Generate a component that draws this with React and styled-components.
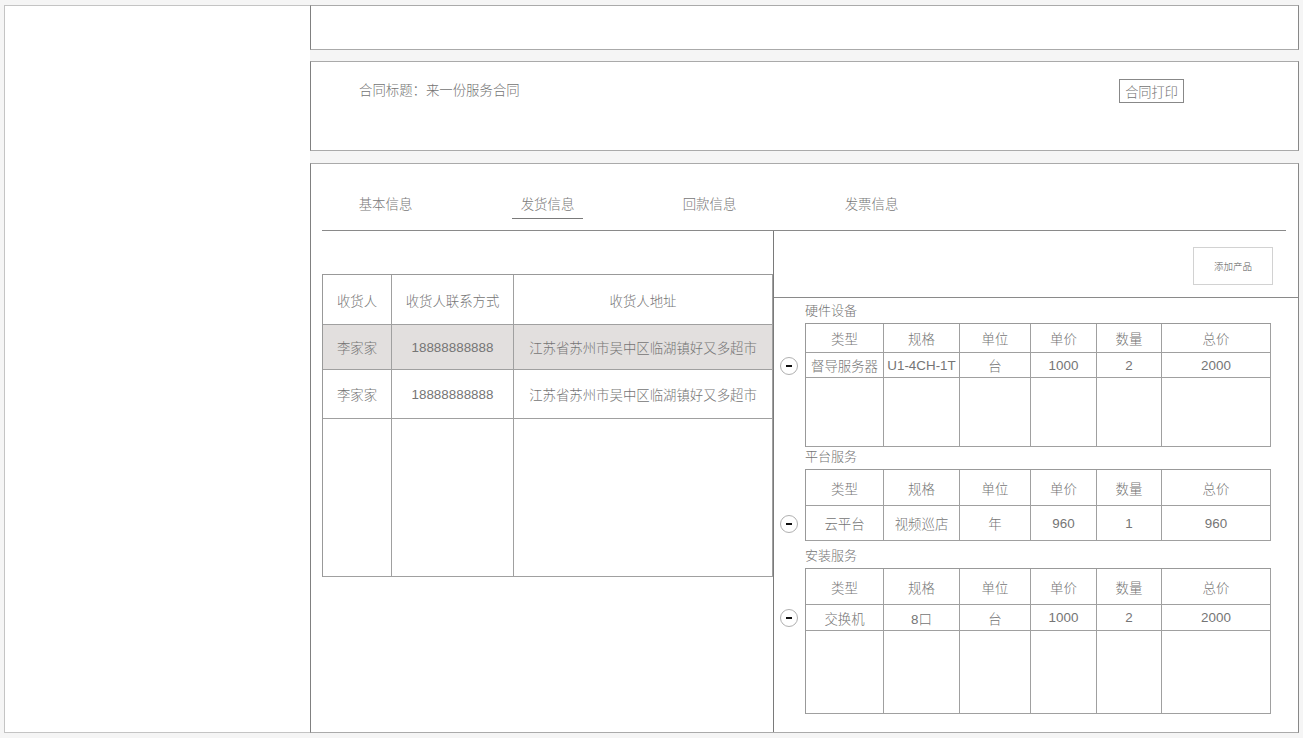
import React from 'react'
import styled, { createGlobalStyle } from 'styled-components'

const GlobalStyle = createGlobalStyle`
  html, body {
    margin: 0;
    padding: 0;
    background: #f5f5f5;
  }
  body {
    font-family: "Liberation Sans", "Noto Sans CJK SC", sans-serif;
    font-weight: 300;
    color: #737373;
  }
  * {
    box-sizing: border-box;
  }
`

const Shell = styled.div`
  display: flex;
  height: 728px;
  margin: 5px 0 0 4px;
`

const Sidebar = styled.aside`
  width: 306px;
  background: #fff;
  border: 1px solid #c4c4c4;
  border-right: none;
`

const MainColumn = styled.main`
  width: 989px;
  display: flex;
  flex-direction: column;
`

const Panel = styled.section`
  background: #fff;
  border: 1px solid #aaa;
  border-left-color: #808080;
  border-right-color: #888;
  height: ${(p) => p.$height || 'auto'};
  margin-bottom: ${(p) => p.$after || '0'};
  flex: ${(p) => (p.$grow ? '1 1 auto' : '0 0 auto')};
  display: flex;
  flex-direction: column;
`

const TitleRow = styled.div`
  display: flex;
  justify-content: space-between;
  align-items: center;
  padding: 17px 114px 0 48px;
`

const Title = styled.span`
  font-size: 13.4px;
  line-height: 24px;
`

const OutlineButton = styled.button`
  height: 24px;
  width: 65px;
  padding: 0;
  background: #fff;
  border: 1px solid #888;
  font-family: inherit;
  font-weight: 300;
  font-size: 13.2px;
  color: #737373;
  cursor: pointer;
`

const TabStrip = styled.nav`
  height: 67px;
  margin: 0 12px 0 11px;
  padding: 0 0 11px 28px;
  display: flex;
  align-items: flex-end;
  gap: 91px;
  border-bottom: 1px solid #8a8a8a;
`

const Tab = styled.div`
  width: 71px;
  height: 28px;
  line-height: 27px;
  text-align: center;
  font-size: 13.4px;
  color: #777;
  border-bottom: 1px solid ${(p) => (p.$active ? '#7a7a7a' : 'transparent')};
`

const Body = styled.div`
  flex: 1;
  display: flex;
`

const LeftPane = styled.div`
  width: 462px;
  padding: 43px 0 0 11px;
`

const RightPane = styled.div`
  flex: 1;
  border-left: 1px solid #7a7a7a;
  display: flex;
  flex-direction: column;
`

const Grid = styled.div`
  display: grid;
  grid-template-columns: ${(p) => p.$cols};
  border-top: 1px solid #999;
  border-left: 1px solid #999;
  width: ${(p) => p.$width};
`

const Cell = styled.div`
  height: ${(p) => p.$h}px;
  border-right: 1px solid #a0a0a0;
  border-bottom: 1px solid #a0a0a0;
  background: ${(p) => (p.$shade ? '#e2dfde' : '#fff')};
  display: flex;
  align-items: center;
  justify-content: center;
  font-size: 13.4px;
  color: #757575;
  white-space: nowrap;
  overflow: hidden;
`

const Toolbar = styled.div`
  height: 67px;
  padding: 16px 25px 0 0;
  display: flex;
  justify-content: flex-end;
  align-items: flex-start;
  border-bottom: 1px solid #8a8a8a;
`

const SmallButton = styled.button`
  width: 80px;
  height: 38px;
  padding: 0;
  background: #fff;
  border: 1px solid #d2d2d2;
  font-family: inherit;
  font-weight: 300;
  font-size: 9.5px;
  color: #555;
  cursor: pointer;
`

const ProductList = styled.div`
  padding: 3px 0 0 6px;
`

const Section = styled.div`
  margin-top: ${(p) => p.$top || 0}px;
`

const SectionLabel = styled.div`
  margin: 0 0 2px 25px;
  line-height: 20px;
  font-size: 13px;
  color: #737373;
`

const SectionBody = styled.div`
  display: flex;
  align-items: flex-start;
`

const Gutter = styled.div`
  width: 25px;
  padding-top: ${(p) => p.$offset}px;
`

const MinusButton = styled.button`
  width: 18px;
  height: 18px;
  padding: 0;
  border-radius: 50%;
  border: 1px solid #b0b0b0;
  background: #fff;
  display: flex;
  align-items: center;
  justify-content: center;
  cursor: pointer;

  &::before {
    content: '';
    width: 6px;
    height: 2.5px;
    background: #111;
  }
`

const consignees = [
  { name: '李家家', phone: '18888888888', address: '江苏省苏州市吴中区临湖镇好又多超市', h: 45, shade: true },
  { name: '李家家', phone: '18888888888', address: '江苏省苏州市吴中区临湖镇好又多超市', h: 49 },
]

const productHead = ['类型', '规格', '单位', '单价', '数量', '总价']
const productCols = '78px 76px 71px 66px 65px 109px'

const sections = [
  {
    label: '硬件设备',
    top: 0,
    head: 29,
    rowH: 25,
    filler: 69,
    row: ['督导服务器', 'U1-4CH-1T', '台', '1000', '2', '2000'],
  },
  {
    label: '平台服务',
    top: 0,
    head: 36,
    rowH: 35,
    filler: 0,
    row: ['云平台', '视频巡店', '年', '960', '1', '960'],
  },
  {
    label: '安装服务',
    top: 5,
    head: 36,
    rowH: 26,
    filler: 83,
    row: ['交换机', '8口', '台', '1000', '2', '2000'],
  },
]

const tabs = ['基本信息', '发货信息', '回款信息', '发票信息']

const ConsigneeTable = () => (
  <Grid $cols="69px 122px 259px" $width="451px">
    <Cell $h={50}>收货人</Cell>
    <Cell $h={50}>收货人联系方式</Cell>
    <Cell $h={50}>收货人地址</Cell>
    {consignees.map((c, i) => (
      <React.Fragment key={i}>
        <Cell $h={c.h} $shade={c.shade}>{c.name}</Cell>
        <Cell $h={c.h} $shade={c.shade}>{c.phone}</Cell>
        <Cell $h={c.h} $shade={c.shade}>{c.address}</Cell>
      </React.Fragment>
    ))}
    <Cell $h={158} />
    <Cell $h={158} />
    <Cell $h={158} />
  </Grid>
)

const ProductSection = ({ section }) => (
  <Section $top={section.top}>
    <SectionLabel>{section.label}</SectionLabel>
    <SectionBody>
      <Gutter $offset={section.head + Math.round((section.rowH - 18) / 2) + 1}>
        <MinusButton aria-label="删除" />
      </Gutter>
      <Grid $cols={productCols} $width="466px">
        {productHead.map((h) => (
          <Cell key={h} $h={section.head}>{h}</Cell>
        ))}
        {section.row.map((v, i) => (
          <Cell key={i} $h={section.rowH}>{v}</Cell>
        ))}
        {section.filler > 0 &&
          productHead.map((h) => <Cell key={'f' + h} $h={section.filler} />)}
      </Grid>
    </SectionBody>
  </Section>
)

const App = () => (
  <>
    <GlobalStyle />
    <Shell>
      <Sidebar />
      <MainColumn>
        <Panel $height="45px" $after="11px" />
        <Panel $height="90px" $after="12px">
          <TitleRow>
            <Title>合同标题：来一份服务合同</Title>
            <OutlineButton>合同打印</OutlineButton>
          </TitleRow>
        </Panel>
        <Panel $grow>
          <TabStrip>
            {tabs.map((t) => (
              <Tab key={t} $active={t === '发货信息'}>
                {t}
              </Tab>
            ))}
          </TabStrip>
          <Body>
            <LeftPane>
              <ConsigneeTable />
            </LeftPane>
            <RightPane>
              <Toolbar>
                <SmallButton>添加产品</SmallButton>
              </Toolbar>
              <ProductList>
                {sections.map((s) => (
                  <ProductSection key={s.label} section={s} />
                ))}
              </ProductList>
            </RightPane>
          </Body>
        </Panel>
      </MainColumn>
    </Shell>
  </>
)

export default App
